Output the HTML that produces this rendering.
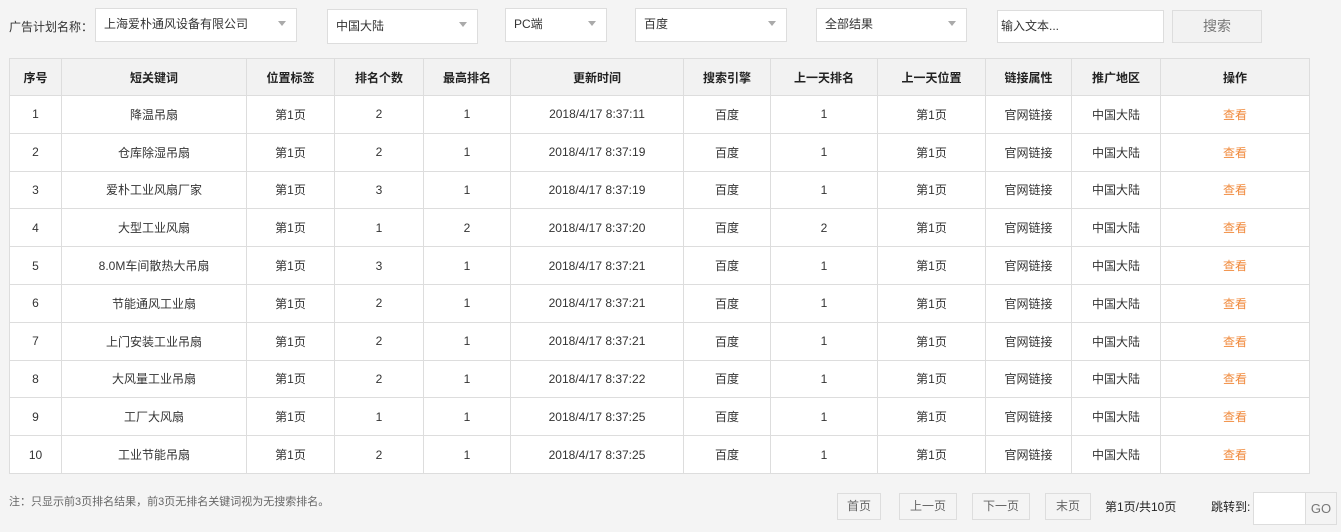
<!DOCTYPE html>
<html><head><meta charset="utf-8"><style>
*{box-sizing:border-box;margin:0;padding:0}
body{width:1341px;height:532px;background:#f4f4f4;font-family:"Liberation Sans","Noto Sans CJK SC",sans-serif;font-size:12px;color:#333;position:relative;overflow:hidden}
.a{position:absolute;white-space:nowrap}
.sel{position:absolute;background:#fff;border:1px solid #ddd;padding-left:8px;line-height:30px;color:#333}
.sel:after{content:"";position:absolute;right:10px;top:12px;border-left:4px solid transparent;border-right:4px solid transparent;border-top:5px solid #aaa}
table{position:absolute;left:9px;top:58px;border-collapse:collapse;background:#fff}
td,th{border:1px solid #ddd;text-align:center;height:37.8px;padding:0;font-size:12px}
th{background:#f2f2f2;font-weight:bold;color:#222;height:37px}
.o{color:#f08a3c}
.pb{position:absolute;top:493px;height:27px;border:1px solid #ddd;background:#f4f4f4;color:#666;text-align:center;line-height:25px}
</style></head><body>
<div class="a" style="left:9px;top:18px">广告计划名称：</div>
<div class="sel" style="left:95px;top:8px;width:202px;height:34px">上海爱朴通风设备有限公司</div>
<div class="sel" style="left:327px;top:9px;width:151px;height:35px;line-height:33px">中国大陆</div>
<div class="sel" style="left:505px;top:8px;width:102px;height:34px">PC端</div>
<div class="sel" style="left:635px;top:8px;width:152px;height:34px">百度</div>
<div class="sel" style="left:816px;top:8px;width:151px;height:34px">全部结果</div>
<div class="a" style="left:997px;top:10px;width:167px;height:33px;background:#fff;border:1px solid #ddd;line-height:31px;padding-left:3px">输入文本...</div>
<div class="a" style="left:1172px;top:10px;width:90px;height:33px;border:1px solid #ddd;background:#f2f2f2;color:#777;text-align:center;line-height:31px;font-size:14px">搜索</div>
<table>
<colgroup><col style="width:52px"><col style="width:185px"><col style="width:88px"><col style="width:89px"><col style="width:87px"><col style="width:173px"><col style="width:87px"><col style="width:107px"><col style="width:108px"><col style="width:86px"><col style="width:89px"><col style="width:149px"></colgroup>
<tr><th>序号</th><th>短关键词</th><th>位置标签</th><th>排名个数</th><th>最高排名</th><th>更新时间</th><th>搜索引擎</th><th>上一天排名</th><th>上一天位置</th><th>链接属性</th><th>推广地区</th><th>操作</th></tr>
<tr><td>1</td><td>降温吊扇</td><td>第1页</td><td>2</td><td>1</td><td>2018/4/17 8:37:11</td><td>百度</td><td>1</td><td>第1页</td><td>官网链接</td><td>中国大陆</td><td class="o">查看</td></tr>
<tr><td>2</td><td>仓库除湿吊扇</td><td>第1页</td><td>2</td><td>1</td><td>2018/4/17 8:37:19</td><td>百度</td><td>1</td><td>第1页</td><td>官网链接</td><td>中国大陆</td><td class="o">查看</td></tr>
<tr><td>3</td><td>爱朴工业风扇厂家</td><td>第1页</td><td>3</td><td>1</td><td>2018/4/17 8:37:19</td><td>百度</td><td>1</td><td>第1页</td><td>官网链接</td><td>中国大陆</td><td class="o">查看</td></tr>
<tr><td>4</td><td>大型工业风扇</td><td>第1页</td><td>1</td><td>2</td><td>2018/4/17 8:37:20</td><td>百度</td><td>2</td><td>第1页</td><td>官网链接</td><td>中国大陆</td><td class="o">查看</td></tr>
<tr><td>5</td><td>8.0M车间散热大吊扇</td><td>第1页</td><td>3</td><td>1</td><td>2018/4/17 8:37:21</td><td>百度</td><td>1</td><td>第1页</td><td>官网链接</td><td>中国大陆</td><td class="o">查看</td></tr>
<tr><td>6</td><td>节能通风工业扇</td><td>第1页</td><td>2</td><td>1</td><td>2018/4/17 8:37:21</td><td>百度</td><td>1</td><td>第1页</td><td>官网链接</td><td>中国大陆</td><td class="o">查看</td></tr>
<tr><td>7</td><td>上门安装工业吊扇</td><td>第1页</td><td>2</td><td>1</td><td>2018/4/17 8:37:21</td><td>百度</td><td>1</td><td>第1页</td><td>官网链接</td><td>中国大陆</td><td class="o">查看</td></tr>
<tr><td>8</td><td>大风量工业吊扇</td><td>第1页</td><td>2</td><td>1</td><td>2018/4/17 8:37:22</td><td>百度</td><td>1</td><td>第1页</td><td>官网链接</td><td>中国大陆</td><td class="o">查看</td></tr>
<tr><td>9</td><td>工厂大风扇</td><td>第1页</td><td>1</td><td>1</td><td>2018/4/17 8:37:25</td><td>百度</td><td>1</td><td>第1页</td><td>官网链接</td><td>中国大陆</td><td class="o">查看</td></tr>
<tr><td>10</td><td>工业节能吊扇</td><td>第1页</td><td>2</td><td>1</td><td>2018/4/17 8:37:25</td><td>百度</td><td>1</td><td>第1页</td><td>官网链接</td><td>中国大陆</td><td class="o">查看</td></tr>
</table>
<div class="a" style="left:9px;top:493px;color:#666;font-size:11px">注：只显示前3页排名结果，前3页无排名关键词视为无搜索排名。</div>
<div class="pb" style="left:837px;width:44px">首页</div>
<div class="pb" style="left:899px;width:58px">上一页</div>
<div class="pb" style="left:972px;width:58px">下一页</div>
<div class="pb" style="left:1045px;width:46px">末页</div>
<div class="a" style="left:1105px;top:498px;color:#222">第1页/共10页</div>
<div class="a" style="left:1211px;top:498px;color:#222">跳转到:</div>
<div class="a" style="left:1253px;top:492px;width:53px;height:33px;background:#fff;border:1px solid #ddd"></div>
<div class="a" style="left:1305px;top:492px;width:32px;height:33px;border:1px solid #ddd;background:#f4f4f4;color:#777;text-align:center;line-height:31px;font-size:13px">GO</div>
</body></html>
